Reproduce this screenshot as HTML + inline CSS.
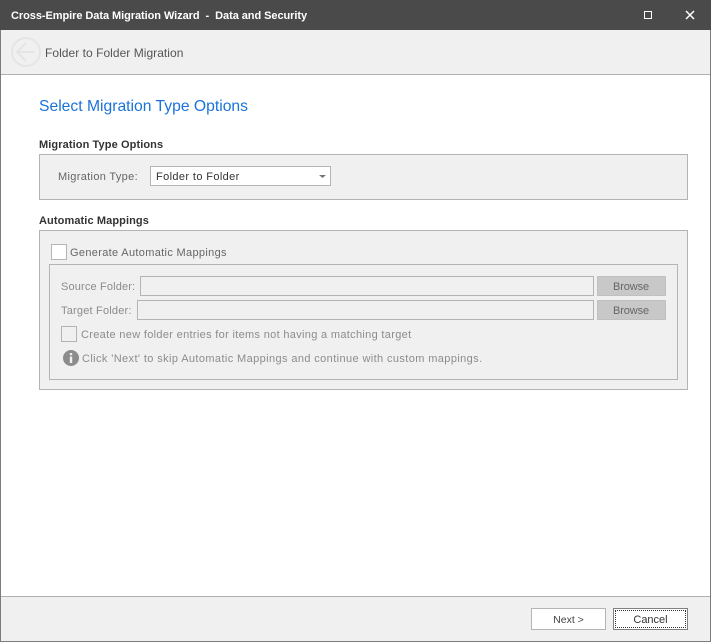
<!DOCTYPE html>
<html><head><meta charset="utf-8">
<style>
html,body{margin:0;padding:0;background:#fff}
body{width:711px;height:642px;position:relative;overflow:hidden;font-family:"Liberation Sans",sans-serif;font-size:11px;color:#333}
div,span{position:absolute;box-sizing:border-box;white-space:pre}
.t{line-height:14px;height:14px}
.g{color:#8c8c8c}
.panel{background:#f0f0f0;border:1px solid #b4b4b4}
.inp{background:#f0f0f0;border:1px solid #b4b4b4;height:20px}
.br{background:#c8c8c8;border:1px solid #c0c0c0;width:69px;height:20px;text-align:center;line-height:20px;color:#666;font-size:11px;letter-spacing:-.1px;padding-right:1px}
.cb{border:1px solid #b4b4b4}
</style></head><body>
<div style="left:0;top:0;width:711px;height:642px;border:1px solid #7c7c7c;border-top:0"></div>
<div style="left:0;top:0;width:711px;height:30px;background:#4a4a4a"></div>
<div class="t" style="left:11px;top:9px;color:#fff;font-weight:bold;font-size:11px;letter-spacing:-.06px">Cross-Empire Data Migration Wizard  -  Data and Security</div>
<svg style="position:absolute;left:640px;top:8px" width="60" height="15" viewBox="0 0 60 15"><rect x="4.5" y="3.5" width="7" height="7" fill="none" stroke="#fff"/><path d="M46 3L54 11M54 3L46 11" stroke="#fff" stroke-width="1.5" fill="none"/></svg>
<div style="left:1px;top:30px;width:709px;height:45px;background:#f0f0f0;border-bottom:1px solid #b0b0b0"></div>
<svg style="position:absolute;left:10px;top:36px" width="32" height="32" viewBox="0 0 32 32"><circle cx="16" cy="16" r="14" fill="none" stroke="#e5e5e5" stroke-width="2"/><path d="M25 16H8M16 7L7 16L16 25" fill="none" stroke="#e5e5e5" stroke-width="2"/></svg>
<div class="t" style="left:45px;top:46px;color:#555;font-size:12px;letter-spacing:.04px">Folder to Folder Migration</div>
<div class="t" style="left:39px;top:98px;height:18px;line-height:18px;font-size:15.7px;color:#1a73d9">Select Migration Type Options</div>
<div class="t" style="left:39px;top:138px;font-weight:bold;color:#333;letter-spacing:.1px">Migration Type Options</div>
<div class="panel" style="left:39px;top:154px;width:649px;height:46px"></div>
<div class="t" style="left:58px;top:170px;color:#666;letter-spacing:.33px">Migration Type:</div>
<div style="left:150px;top:166px;width:181px;height:20px;background:#fff;border:1px solid #b4b4b4"></div>
<div class="t" style="left:156px;top:170px;color:#333;letter-spacing:.38px">Folder to Folder</div>
<svg style="position:absolute;left:318px;top:174px" width="9" height="5"><path d="M1 1H8L4.5 4Z" fill="#777"/></svg>
<div class="t" style="left:39px;top:214px;font-weight:bold;color:#333;letter-spacing:.1px">Automatic Mappings</div>
<div class="panel" style="left:39px;top:230px;width:649px;height:160px"></div>
<div class="cb" style="left:51px;top:244px;width:16px;height:16px;background:#fff"></div>
<div class="t" style="left:70px;top:246px;color:#666;letter-spacing:.33px">Generate Automatic Mappings</div>
<div class="panel" style="left:49px;top:264px;width:629px;height:116px"></div>
<div class="t g" style="left:61px;top:280px;letter-spacing:.15px">Source Folder:</div>
<div class="inp" style="left:140px;top:276px;width:454px"></div>
<div class="br" style="left:597px;top:276px">Browse</div>
<div class="t g" style="left:61px;top:304px;letter-spacing:.2px">Target Folder:</div>
<div class="inp" style="left:137px;top:300px;width:457px"></div>
<div class="br" style="left:597px;top:300px">Browse</div>
<div class="cb" style="left:61px;top:326px;width:16px;height:16px"></div>
<div class="t g" style="left:81px;top:328px;letter-spacing:.32px">Create new folder entries for items not having a matching target</div>
<svg style="position:absolute;left:63px;top:350px" width="16" height="16" viewBox="0 0 16 16"><circle cx="8" cy="8" r="8" fill="#8c8c8c"/><rect x="6.8" y="3" width="2.4" height="2.2" fill="#f0f0f0"/><rect x="6.8" y="6.5" width="2.4" height="6.5" fill="#f0f0f0"/></svg>
<div class="t g" style="left:82px;top:352px;letter-spacing:.39px">Click 'Next' to skip Automatic Mappings and continue with custom mappings.</div>
<div style="left:1px;top:596px;width:709px;height:45px;background:#f0f0f0;border-top:1px solid #b0b0b0"></div>
<div style="left:531px;top:608px;width:75px;height:22px;background:#fff;border:1px solid #b4b4b4;text-align:center;line-height:22px;color:#444;font-size:10.5px">Next &gt;</div>
<div style="left:613px;top:608px;width:75px;height:22px;background:#fff;border:1px solid #808080;text-align:center;line-height:22px;color:#333">Cancel</div>
<div style="left:615px;top:610px;width:71px;height:18px;border:1px dotted #333"></div>
</body></html>
